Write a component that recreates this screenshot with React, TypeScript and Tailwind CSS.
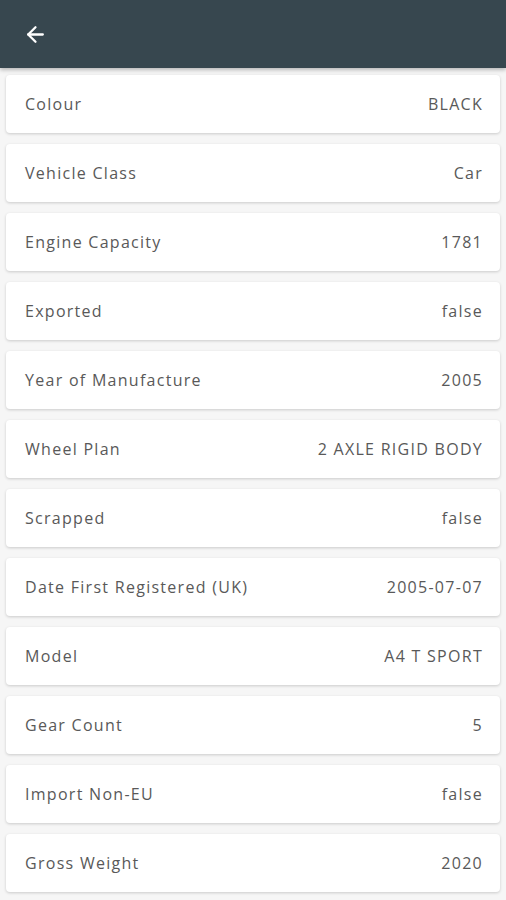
import { ArrowLeft } from "lucide-react";

const ROWS = [
  { label: "Colour", value: "BLACK" },
  { label: "Vehicle Class", value: "Car" },
  { label: "Engine Capacity", value: "1781" },
  { label: "Exported", value: "false" },
  { label: "Year of Manufacture", value: "2005" },
  { label: "Wheel Plan", value: "2 AXLE RIGID BODY" },
  { label: "Scrapped", value: "false" },
  { label: "Date First Registered (UK)", value: "2005-07-07" },
  { label: "Model", value: "A4 T SPORT" },
  { label: "Gear Count", value: "5" },
  { label: "Import Non-EU", value: "false" },
  { label: "Gross Weight", value: "2020" },
];

export default function App() {
  return (
    <div className="h-[900px] overflow-hidden bg-[#f6f6f6] font-['Open_Sans',sans-serif]">
      {/* app bar */}
      <div className="flex h-[68px] items-center bg-[#37474f] px-[23px] shadow-[0_2px_4px_rgba(0,0,0,0.25)]">
        <ArrowLeft className="h-[25px] w-[25px] text-white" strokeWidth={2.2} />
      </div>

      <div className="flex flex-col gap-[11px] px-[6px] pt-[7px]">
        {ROWS.map((r) => (
          <div
            key={r.label}
            className="flex h-[58px] items-center justify-between rounded-[4px] bg-white pl-[19px] pr-[17px] text-[16px] tracking-[0.08em] text-[#595959] shadow-[0_1px_3px_rgba(0,0,0,0.18)]"
          >
            <span>{r.label}</span>
            <span>{r.value}</span>
          </div>
        ))}
      </div>
    </div>
  );
}
